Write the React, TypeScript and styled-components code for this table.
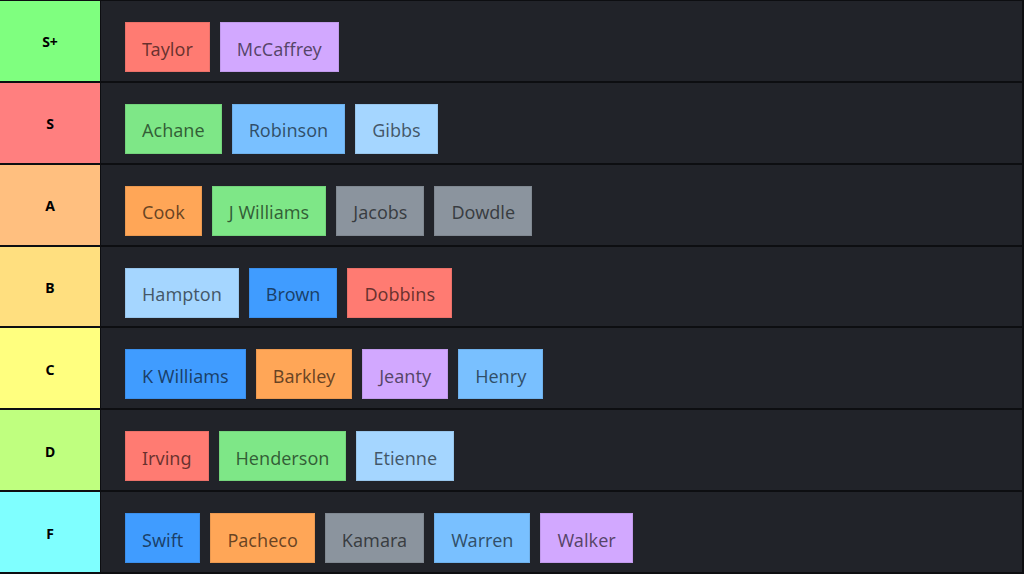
import React from 'react'
import styled, { createGlobalStyle } from 'styled-components'

const GlobalStyle = createGlobalStyle`
  html, body {
    margin: 0;
    padding: 0;
    background: #0d0e11;
  }
`

const colors = {
  red: '#ff7b72',
  purple: '#d2a8ff',
  green: '#7ee787',
  blue: '#79c0ff',
  sky: '#a5d6ff',
  orange: '#ffa657',
  gray: '#8b949e',
  azure: '#409cff',
}

type Color = keyof typeof colors

const tiers: { label: string; bg: string; items: [string, Color][] }[] = [
  { label: 'S+', bg: '#7fff7f', items: [['Taylor', 'red'], ['McCaffrey', 'purple']] },
  { label: 'S', bg: '#ff7f7f', items: [['Achane', 'green'], ['Robinson', 'blue'], ['Gibbs', 'sky']] },
  {
    label: 'A',
    bg: '#ffbf7f',
    items: [['Cook', 'orange'], ['J Williams', 'green'], ['Jacobs', 'gray'], ['Dowdle', 'gray']],
  },
  { label: 'B', bg: '#ffdf7f', items: [['Hampton', 'sky'], ['Brown', 'azure'], ['Dobbins', 'red']] },
  {
    label: 'C',
    bg: '#ffff7f',
    items: [['K Williams', 'azure'], ['Barkley', 'orange'], ['Jeanty', 'purple'], ['Henry', 'blue']],
  },
  { label: 'D', bg: '#bfff7f', items: [['Irving', 'red'], ['Henderson', 'green'], ['Etienne', 'sky']] },
  {
    label: 'F',
    bg: '#7fffff',
    items: [['Swift', 'azure'], ['Pacheco', 'orange'], ['Kamara', 'gray'], ['Warren', 'blue'], ['Walker', 'purple']],
  },
]

const Board = styled.div`
  display: flex;
  flex-direction: column;
  gap: 2px;
  padding: 1px 2px 2px 0;
  height: 574px;
  box-sizing: border-box;
`

const Row = styled.div`
  display: grid;
  grid-template-columns: 100px 1fr;
  column-gap: 1px;
  flex: 1;
`

const Label = styled.div<{ $bg: string }>`
  background: ${(p) => p.$bg};
  display: flex;
  align-items: center;
  justify-content: center;
  font-family: 'Noto Sans', 'Open Sans', sans-serif;
  font-weight: 700;
  font-size: 14px;
  color: #000;
  padding-top: 2px;
`

const Items = styled.div`
  background: #212329;
  display: flex;
  align-items: flex-start;
  gap: 10px;
  padding: 21px 24px 0;
`

const Chip = styled.div<{ $color: Color }>`
  background: ${(p) => colors[p.$color]};
  height: 50px;
  padding: 3px 16px 0;
  display: flex;
  align-items: center;
  font-family: 'Noto Sans', 'Open Sans', sans-serif;
  font-size: 18px;
  color: rgba(0, 0, 0, 0.6);
  box-sizing: border-box;
  border: 1px solid rgba(0, 0, 0, 0.08);
`

export default function App() {
  return (
    <>
      <GlobalStyle />
      <Board>
        {tiers.map((tier) => (
          <Row key={tier.label}>
            <Label $bg={tier.bg}>{tier.label}</Label>
            <Items>
              {tier.items.map(([name, color]) => (
                <Chip key={name} $color={color}>
                  {name}
                </Chip>
              ))}
            </Items>
          </Row>
        ))}
      </Board>
    </>
  )
}
